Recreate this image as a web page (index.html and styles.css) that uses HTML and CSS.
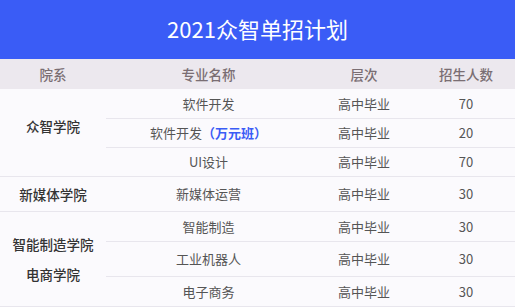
FILE: index.html
```html
<!DOCTYPE html>
<html lang="zh">
<head>
<meta charset="utf-8">
<link rel="stylesheet" href="styles.css">
</head>
<body>
<div class="page">
  <div class="banner">2021众智单招计划</div>
  <table class="plan">
    <colgroup>
      <col class="c1"><col class="c2"><col class="c3"><col class="c4">
    </colgroup>
    <thead>
      <tr><th>院系</th><th>专业名称</th><th>层次</th><th>招生人数</th></tr>
    </thead>
    <tbody>
      <tr class="r29">
        <td class="dept shift" rowspan="3">众智学院</td>
        <td>软件开发</td><td>高中毕业</td><td>70</td>
      </tr>
      <tr class="r29">
        <td>软件开发<span class="hl">（万元班）</span></td><td>高中毕业</td><td>20</td>
      </tr>
      <tr class="r29">
        <td>UI设计</td><td>高中毕业</td><td>70</td>
      </tr>
      <tr class="r35">
        <td class="dept">新媒体学院</td>
        <td>新媒体运营</td><td>高中毕业</td><td>30</td>
      </tr>
      <tr class="r30">
        <td class="dept multi" rowspan="3"><div class="line">智能制造学院</div><div class="line">电商学院</div></td>
        <td>智能制造</td><td>高中毕业</td><td>30</td>
      </tr>
      <tr class="r35">
        <td>工业机器人</td><td>高中毕业</td><td>30</td>
      </tr>
      <tr class="r30">
        <td>电子商务</td><td>高中毕业</td><td>30</td>
      </tr>
    </tbody>
  </table>
</div>
</body>
</html>
```
FILE: styles.css
```css
html, body {
  margin: 0;
  padding: 0;
  background: #ffffff;
}
body {
  font-family: "Noto Sans CJK SC", "Noto Sans", sans-serif;
}
.page {
  width: 515px;
}
.banner {
  height: 59px;
  background: #3a5cf6;
  color: #ffffff;
  font-size: 22px;
  line-height: 57px;
  text-align: center;
}
.plan {
  width: 515px;
  table-layout: fixed;
  border-collapse: collapse;
  background: #fbfafd;
}
.c1 { width: 106px; }
.c2 { width: 205px; }
.c3 { width: 106px; }
.c4 { width: 98px; }
.plan th {
  height: 30px;
  padding: 0;
  background: #ece8ee;
  color: #7a6e73;
  font-size: 13.5px;
  font-weight: 500;
  text-align: center;
  vertical-align: middle;
}
.plan td {
  padding: 0;
  font-size: 13px;
  color: #555555;
  text-align: center;
  vertical-align: middle;
  border-bottom: 1px solid #e8e6ed;
}
.r29 { height: 29px; }
.r30 { height: 30px; }
.r35 { height: 35px; }
.plan td.dept {
  font-size: 13.5px;
  font-weight: 500;
  color: #333333;
}
.plan td.shift {
  padding-bottom: 12px;
}
.line {
  line-height: 30px;
}
.hl {
  color: #3a5cf6;
  font-weight: bold;
}
```
